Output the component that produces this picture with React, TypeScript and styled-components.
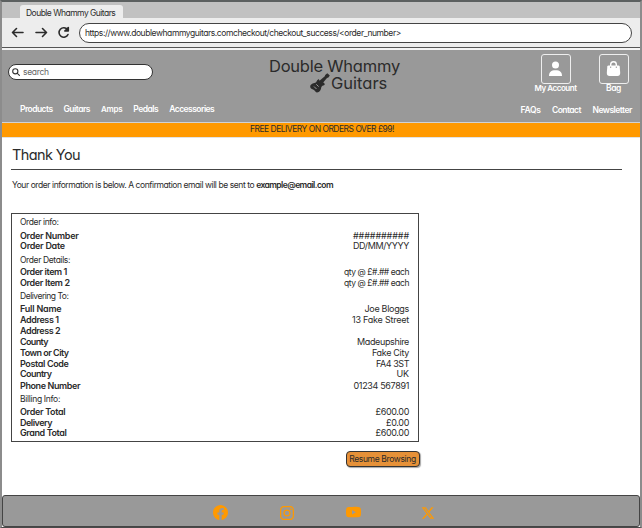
import React from "react";
import styled, { createGlobalStyle } from "styled-components";
import { FaXTwitter } from "react-icons/fa6";
import { BsFacebook, BsInstagram, BsYoutube } from "react-icons/bs";

const GlobalStyle = createGlobalStyle`
  * { box-sizing: border-box; }
  body {
    margin: 0;
    background: #fff;
    color: #2b2b2b;
    font-family: Inter, "Liberation Sans", sans-serif;
    font-feature-settings: "cv11";
  }
`;

const Window = styled.div`
  width: 642px;
  height: 528px;
  display: flex;
  flex-direction: column;
  overflow: hidden;
  border-style: solid;
  border-color: #5c6060 #8c8c8c #4a4a4a;
  border-width: 2px 2px 1px;
`;

const Text = styled.span<{ $track?: number; $size?: number; $weight?: number }>`
  white-space: nowrap;
  font-size: ${(p) => p.$size ?? 8.5}px;
  font-weight: ${(p) => p.$weight ?? 400};
  letter-spacing: ${(p) => p.$track ?? 0}px;
`;

const TabStrip = styled.div`
  flex: none;
  height: 16px;
  padding: 3px 0 0 18px;
  background: #c1c1c1;
`;

const Tab = styled.div`
  width: 103px;
  height: 13px;
  padding-left: 6px;
  line-height: 17px;
  display: flex;
  background: #ededed;
  border-radius: 3px 3px 0 0;
`;

const Toolbar = styled.div`
  flex: none;
  display: flex;
  align-items: center;
  height: 30px;
  padding: 0 8px 0 9px;
  background: #ededed;
  border-bottom: 1px solid #555;
`;

const NavIcon = styled.svg<{ $gap: number }>`
  flex: none;
  width: 13px;
  height: 13px;
  margin-right: ${(p) => p.$gap}px;
  fill: none;
  stroke: #2b2b2b;
  stroke-width: 1.6;
  stroke-linecap: round;
  stroke-linejoin: round;
`;

const Address = styled.div`
  flex: 1;
  height: 20px;
  padding-left: 5px;
  line-height: 18px;
  background: #fff;
  border: 1.5px solid #444;
  border-radius: 10px;
`;

const Header = styled.header`
  flex: none;
  display: grid;
  grid-template-columns: 254px 1fr 120px;
  height: 75px;
  background: #999;
  border-top: 2px solid #f4f4f4;
  border-bottom: 1px solid #d2d2d2;
`;

const HeaderLeft = styled.div`
  padding: 14px 0 0 6px;
`;

const Search = styled.div`
  display: flex;
  align-items: center;
  gap: 3px;
  width: 145px;
  height: 16px;
  padding: 0 0 1px 3px;
  color: #666;
  background: #fff;
  border: 1px solid #333;
  border-radius: 8px;
`;

const SearchIcon = styled.svg`
  width: 8px;
  height: 8px;
  fill: none;
  stroke: #333;
  stroke-width: 1.1;
  stroke-linecap: round;
`;

const Menu = styled.nav`
  display: flex;
  gap: 11px;
  margin: 24px 0 0 12px;
  line-height: 10px;
  color: #fff;
`;

const Logo = styled.div`
  display: flex;
  flex-direction: column;
  padding: 8px 0 0 13px;
  color: #2b2b2b;
  line-height: 17px;
`;

const LogoLine = styled.div`
  display: flex;
  align-items: center;
  height: 17px;
  padding-left: 41px;
  gap: 1px;
`;

const GuitarIcon = styled.svg`
  width: 20px;
  height: 20px;
  margin-top: -2px;
`;

const HeaderRight = styled.div`
  color: #fff;
`;

const Actions = styled.div`
  display: flex;
  padding-top: 4px;
`;

const Action = styled.div<{ $width: number; $shift?: number }>`
  display: flex;
  flex-direction: column;
  align-items: center;
  width: ${(p) => p.$width}px;
  margin-left: ${(p) => p.$shift ?? 0}px;
  line-height: 9px;
`;

const IconBox = styled.div`
  display: flex;
  align-items: center;
  justify-content: center;
  width: 30px;
  height: 30px;
  border: 1px solid #eee;
  border-radius: 3px;

  svg { width: 15px; height: 17px; fill: #fff; margin-bottom: 2px; }
`;

const HelpLinks = styled.nav`
  display: flex;
  gap: 11.5px;
  margin: 12px 0 0 0.5px;
  line-height: 10px;
`;

const Promo = styled.div`
  flex: none;
  display: flex;
  justify-content: center;
  height: 15px;
  padding-left: 2px;
  line-height: 12px;
  background: #f90;
  border-bottom: 1px solid #e2e2e2;
`;

const Main = styled.main`
  flex: 1;
  padding: 9px 18px 0 9px;
`;

const Title = styled.h1`
  height: 23px;
  margin: 0;
  padding-left: 1px;
  font-size: 14.5px;
  font-weight: 400;
  letter-spacing: -0.6px;
  line-height: 16px;
  border-bottom: 1px solid #444;
`;

const Intro = styled.p`
  display: flex;
  gap: 2px;
  height: 12px;
  margin: 9px 0 22px 1px;
  line-height: 12px;
`;

const Panel = styled.section`
  width: 408px;
  height: 229px;
  padding: 3px 9px 0 8px;
  border: 1px solid #444;
  border-bottom-width: 1.5px;
`;

const Row = styled.div<{ $gap: number }>`
  display: flex;
  justify-content: space-between;
  height: 10px;
  margin-top: ${(p) => p.$gap}px;
  line-height: 10px;
`;

const ResumeButton = styled.button`
  display: flex;
  align-items: center;
  justify-content: center;
  width: 74px;
  height: 16px;
  margin: 9px 0 0 334.5px;
  padding: 0;
  font: inherit;
  font-feature-settings: inherit;
  color: #2b2b2b;
  background: #e69138;
  border: 1px solid #333;
  border-bottom-width: 1.5px;
  border-radius: 4px;
  box-shadow: 1px 1px 1px rgba(0, 0, 0, 0.35);
`;

const Footer = styled.footer`
  flex: none;
  display: flex;
  align-items: center;
  height: 32px;
  padding: 3px 0 0 210px;
  gap: 52px;
  color: #f90;
  background: #999;
  border: 1px solid #444;
  border-width: 1.5px 1px 1px;
  border-radius: 3px;

  svg:last-child { margin-left: 8px; }
`;

interface Label { text: string; track: number; size?: number }
interface Line { label: string; track: number; gap: number; heading?: boolean; value?: string; valueTrack?: number; valueSize?: number }

const menu: Label[] = [
  { text: "Products", track: -0.55 },
  { text: "Guitars", track: -0.51 },
  { text: "Amps", track: -0.3, size: 8 },
  { text: "Pedals", track: -0.49 },
  { text: "Accessories", track: -0.54 },
];

const help: Label[] = [
  { text: "FAQs", track: -0.33 },
  { text: "Contact", track: -0.55 },
  { text: "Newsletter", track: -0.5 },
];

const lines: Line[] = [
  { label: "Order info:", track: -0.39, gap: 0, heading: true },
  { label: "Order Number", track: -0.3, gap: 4, value: "##########", valueTrack: -0.1 },
  { label: "Order Date", track: -0.28, gap: 0, value: "DD/MM/YYYY", valueTrack: -0.38 },
  { label: "Order Details:", track: -0.38, gap: 4, heading: true },
  { label: "Order item 1", track: -0.42, gap: 2, value: "qty @ £#.## each", valueTrack: -0.45, valueSize: 8.5 },
  { label: "Order Item 2", track: -0.36, gap: 1, value: "qty @ £#.## each", valueTrack: -0.45, valueSize: 8.5 },
  { label: "Delivering To:", track: -0.48, gap: 3, heading: true },
  { label: "Full Name", track: -0.22, gap: 3, value: "Joe Bloggs", valueTrack: -0.31 },
  { label: "Address 1", track: -0.4, gap: 1, value: "13 Fake Street", valueTrack: -0.22 },
  { label: "Address 2", track: -0.43, gap: 1 },
  { label: "County", track: -0.64, gap: 1, value: "Madeupshire", valueTrack: -0.36 },
  { label: "Town or City", track: -0.52, gap: 1, value: "Fake City", valueTrack: -0.32 },
  { label: "Postal Code", track: -0.37, gap: 1, value: "FA4 3ST", valueTrack: -0.46 },
  { label: "Country", track: -0.55, gap: 0, value: "UK", valueTrack: -0.13 },
  { label: "Phone Number", track: -0.4, gap: 2, value: "01234 567891", valueTrack: -0.34 },
  { label: "Billing Info:", track: -0.32, gap: 3, heading: true },
  { label: "Order Total", track: -0.32, gap: 3, value: "£600.00", valueTrack: -0.35 },
  { label: "Delivery", track: -0.5, gap: 1, value: "£0.00", valueTrack: -0.33 },
  { label: "Grand Total", track: -0.41, gap: 0, value: "£600.00", valueTrack: -0.35 },
];

export default function App() {
  return (
    <>
      <GlobalStyle />
      <Window>
        <TabStrip>
          <Tab><Text $track={-0.53}>Double Whammy Guitars</Text></Tab>
        </TabStrip>
        <Toolbar>
          <NavIcon viewBox="0 0 13 13" $gap={11}><path d="M12 6.500H1.500M5.500 2.500l-4 4 4 4" /></NavIcon>
          <NavIcon viewBox="0 0 13 13" $gap={9}><path d="M1 6.500h10.500M7.500 2.500l4 4-4 4" /></NavIcon>
          <NavIcon viewBox="0 0 13 13" $gap={9}><path d="M10.500 3.700A4.700 4.700 0 1 0 11 8.500M11.300 1.500v3.500H7.800z" /></NavIcon>
          <Address>
            <Text as="div" $track={-0.43}>
              https://www.doublewhammyguitars.comcheckout/checkout_success/&lt;order_number&gt;
            </Text>
          </Address>
        </Toolbar>
        <Header>
          <HeaderLeft>
            <Search>
              <SearchIcon viewBox="0 0 8 8"><circle cx="3.3" cy="3.3" r="2.6" /><path d="M5.300 5.300 7.400 7.400" /></SearchIcon>
              <Text $track={-0.32}>search</Text>
            </Search>
            <Menu>
              {menu.map((m) => <Text key={m.text} $weight={600} $track={m.track} $size={m.size}>{m.text}</Text>)}
            </Menu>
          </HeaderLeft>
          <Logo>
            <Text $size={16.5} $track={-0.23}>Double Whammy</Text>
            <LogoLine>
              <GuitarIcon viewBox="0 0 20 20">
                <path
                  d="M17.300 0.300 19.800 2.600 18.400 4.600 17 5 13.200 9.600C14.500 10.300 15.300 11.200 14.400 11.900C13 12.500 11.700 12.800 11.300 14.300C11 17.300 9.300 19.600 6.800 19.400C5.300 19.200 5.100 17.600 3.600 16.700C2.200 15.900 0.300 15.800 0.200 13.700C0.300 11.200 3 10.300 5.200 9.800C6.800 9.200 6.600 7 8.100 6.400C9 6.200 9.200 7 9.500 7.700L14.800 3.300 15.200 1.900Z"
                  fill="#2b2b2b"
                />
                <path d="M6.300 11.300l2.300 2.300M4 13.500l2.500 2.500" fill="none" stroke="#999" strokeWidth="1" />
              </GuitarIcon>
              <Text $size={16.5}>Guitars</Text>
            </LogoLine>
          </Logo>
          <HeaderRight>
            <Actions>
              <Action $width={43} $shift={14}>
                <IconBox>
                  <svg viewBox="0 0 15 17"><circle cx="7.5" cy="5" r="3.5" /><path d="M1 16c0-4 2-5.800 6.500-5.800s6.500 1.800 6.500 5.800z" /></svg>
                </IconBox>
                <Text $size={8} $weight={600} $track={-0.45}>My Account</Text>
              </Action>
              <Action $width={31} $shift={21}>
                <IconBox>
                  <svg viewBox="0 0 15 17">
                    <path d="M2.500 5.500h10q1 0 1.200 1l.5 6.500q0 3-2.700 3h-8q-2.700 0-2.700-3l.5-6.500q.2-1 1.200-1z" />
                    <path d="M4.700 7V4.500a2.800 2.800 0 0 1 5.600 0V7" fill="none" stroke="#fff" strokeWidth="1.4" />
                    <path d="M4.700 6.500v1.500M10.300 6.500v1.500" stroke="#999" strokeWidth="1" />
                  </svg>
                </IconBox>
                <Text $weight={600} $track={-0.41}>Bag</Text>
              </Action>
            </Actions>
            <HelpLinks>
              {help.map((m) => <Text key={m.text} $weight={600} $track={m.track}>{m.text}</Text>)}
            </HelpLinks>
          </HeaderRight>
        </Header>
        <Promo><Text $track={-0.51}>FREE DELIVERY ON ORDERS OVER £99!</Text></Promo>
        <Main>
          <Title>Thank You</Title>
          <Intro>
            <Text $track={-0.43}>Your order information is below. A confirmation email will be sent to</Text>
            <Text $weight={600} $track={-0.56}>example@email.com</Text>
          </Intro>
          <Panel>
            {lines.map((l) => (
              <Row key={l.label} $gap={l.gap}>
                <Text $size={l.heading ? 8.5 : 9} $weight={l.heading ? 400 : 600} $track={l.track}>{l.label}</Text>
                {l.value && <Text $size={l.valueSize ?? 9} $track={l.valueTrack}>{l.value}</Text>}
              </Row>
            ))}
          </Panel>
          <ResumeButton><Text $track={-0.35}>Resume Browsing</Text></ResumeButton>
        </Main>
        <Footer>
          <BsFacebook size={15} />
          <BsInstagram size={14} />
          <BsYoutube size={15} />
          <FaXTwitter size={14} />
        </Footer>
      </Window>
    </>
  );
}
